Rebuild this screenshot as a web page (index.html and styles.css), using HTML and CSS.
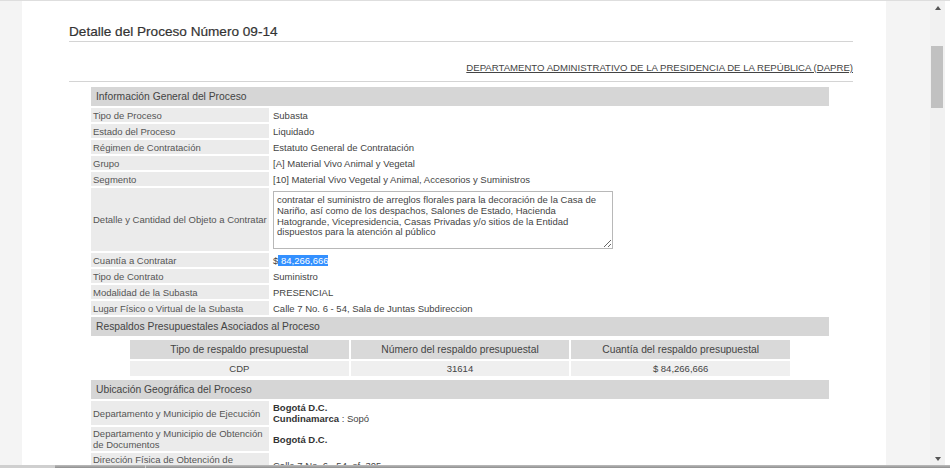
FILE: index.html
```html
<!DOCTYPE html>
<html lang="es">
<head>
<meta charset="UTF-8">
<title>Detalle del Proceso Número 09-14</title>
<link rel="stylesheet" href="styles.css">
</head>
<body>
<div class="window">
    <div class="gutter-left"></div>
    <div class="page">
        <h2 class="title">Detalle del Proceso Número 09-14</h2>
        <div class="agency">
            <a href="#">DEPARTAMENTO ADMINISTRATIVO DE LA PRESIDENCIA DE LA REPÚBLICA (DAPRE)</a>
        </div>
        <table class="detail">
            <colgroup><col class="col-label"><col class="col-value"></colgroup>
            <tr><th colspan="2" class="section">Información General del Proceso</th></tr>
            <tr><td class="label">Tipo de Proceso</td><td class="value">Subasta</td></tr>
            <tr><td class="label">Estado del Proceso</td><td class="value">Liquidado</td></tr>
            <tr><td class="label">Régimen de Contratación</td><td class="value">Estatuto General de Contratación</td></tr>
            <tr><td class="label">Grupo</td><td class="value">[A] Material Vivo Animal y Vegetal</td></tr>
            <tr><td class="label">Segmento</td><td class="value">[10] Material Vivo Vegetal y Animal, Accesorios y Suministros</td></tr>
            <tr>
                <td class="label">Detalle y Cantidad del Objeto a Contratar</td>
                <td class="value boxed"><textarea class="object" readonly>contratar el suministro de arreglos florales para la decoración de la Casa de
Nariño, así como de los despachos, Salones de Estado, Hacienda
Hatogrande, Vicepresidencia, Casas Privadas y/o sitios de la Entidad
dispuestos para la atención al público</textarea></td>
            </tr>
            <tr><td class="label">Cuantía a Contratar</td><td class="value">$<span class="selected"> 84,266,666</span></td></tr>
            <tr><td class="label">Tipo de Contrato</td><td class="value">Suministro</td></tr>
            <tr><td class="label">Modalidad de la Subasta</td><td class="value">PRESENCIAL</td></tr>
            <tr><td class="label">Lugar Físico o Virtual de la Subasta</td><td class="value">Calle 7 No. 6 - 54, Sala de Juntas Subdireccion</td></tr>
            <tr><th colspan="2" class="section">Respaldos Presupuestales Asociados al Proceso</th></tr>
            <tr>
                <td colspan="2" class="nested">
                    <table class="budget">
                        <tr>
                            <th>Tipo de respaldo presupuestal</th>
                            <th>Número del respaldo presupuestal</th>
                            <th>Cuantía del respaldo presupuestal</th>
                        </tr>
                        <tr>
                            <td>CDP</td>
                            <td>31614</td>
                            <td>$ 84,266,666</td>
                        </tr>
                    </table>
                </td>
            </tr>
            <tr><th colspan="2" class="section">Ubicación Geográfica del Proceso</th></tr>
            <tr class="tall">
                <td class="label">Departamento y Municipio de Ejecución</td>
                <td class="value"><b>Bogotá D.C.</b><br><b>Cundinamarca</b> : Sopó</td>
            </tr>
            <tr class="tall">
                <td class="label">Departamento y Municipio de Obtención de Documentos</td>
                <td class="value"><b>Bogotá D.C.</b></td>
            </tr>
            <tr class="tall">
                <td class="label">Dirección Física de Obtención de Documentos</td>
                <td class="value">Calle 7 No. 6 - 54, of. 305</td>
            </tr>
        </table>
    </div>
    <div class="gutter-right"></div>
    <div class="scrollbar">
        <span class="arrow up"></span>
        <span class="thumb"></span>
        <span class="arrow down"></span>
    </div>
    <div class="edge"></div>
</div>
<div class="taskbar">
    <span class="tab"></span>
    <span class="tab"></span>
</div>
</body>
</html>
```

FILE: styles.css
```css
body, html {
    margin: 0;
    height: 100%;
    overflow: hidden;
    font-family: "Liberation Sans", Arial, sans-serif;
    color: #444;
    background: #fff;
}

.window {
    display: flex;
    height: 465px;
    border-top: 1px solid #dedede;
    box-sizing: border-box;
    overflow: hidden;
}

.gutter-left {
    width: 22px;
    flex: none;
    background: #f4f4f4;
}

.page {
    width: 864px;
    flex: none;
    background: #fff;
    padding: 23px 33px 0 47px;
    box-sizing: border-box;
}

.gutter-right {
    width: 44px;
    flex: none;
    background: #f4f4f4;
}

.edge {
    flex: 1;
    background: #fff;
}

.title {
    margin: 0;
    font-size: 13.6px;
    font-weight: normal;
    color: #333;
    line-height: 16px;
    padding-bottom: 1px;
    border-bottom: 1px solid #d4d4d4;
    -webkit-text-stroke: 0.2px #333;
}

.agency {
    text-align: right;
    font-size: 9.6px;
    line-height: 11px;
    padding: 20px 0 8px;
    border-bottom: 1px solid #d4d4d4;
}

.agency a {
    color: #444;
}

/* main detail table */
.detail {
    width: 742px;
    margin: 3px 0 0 20px;
    table-layout: fixed;
    border-spacing: 2px;
    font-size: 9.5px;
}

.col-label { width: 178px; }
.col-value { width: 558px; }

.detail td {
    height: 14px;
    padding: 0 2px;
    line-height: 11px;
    vertical-align: middle;
}

.detail .label {
    background: #ebebeb;
    color: #555;
}

.detail .value {
    background: #fff;
}

.section {
    height: 19px;
    padding: 0 5px;
    text-align: left;
    font-weight: normal;
    font-size: 10.3px;
    background: #d6d6d6;
    color: #444;
}

.detail .boxed {
    padding: 3px 2px 2px;
}

.object {
    display: block;
    width: 340px;
    height: 58px;
    box-sizing: border-box;
    margin: 0;
    padding: 3px 3px;
    font-family: "Liberation Sans", Arial, sans-serif;
    font-size: 9.5px;
    line-height: 10.8px;
    color: #444;
    border: 1px solid #b8b8b8;
    resize: both;
    overflow: hidden;
}

.selected {
    background: #3390ff;
    color: #fff;
}

.detail .nested {
    padding: 0;
    background: #fff;
}

.budget {
    width: 664px;
    margin: 0 auto;
    border-spacing: 2px;
    table-layout: fixed;
    font-size: 9.5px;
}

.budget th {
    height: 19px;
    padding: 0;
    font-weight: normal;
    font-size: 10.3px;
    background: #d9d9d9;
    color: #444;
}

.detail .budget td {
    height: 15px;
    padding: 0;
    text-align: center;
    background: #efefef;
}

.detail .tall td {
    padding: 1px 2px;
}

.detail b {
    color: #333;
}

/* fake scrollbar of the frame */
.scrollbar {
    width: 15px;
    flex: none;
    background: #f1f1f1;
    display: flex;
    flex-direction: column;
    align-items: center;
}

.arrow {
    width: 0;
    height: 0;
    border-left: 3.5px solid transparent;
    border-right: 3.5px solid transparent;
}

.arrow.up {
    margin-top: 5px;
    border-bottom: 4px solid #555;
}

.arrow.down {
    margin-top: auto;
    margin-bottom: 4px;
    border-top: 4px solid #555;
}

.thumb {
    width: 12px;
    height: 62px;
    margin-top: 36px;
    background: #c1c1c1;
    align-self: flex-start;
    margin-left: 1px;
}

.taskbar {
    height: 3px;
    display: flex;
    background: linear-gradient(#bdbdbd, #8e8e8e);
}

.taskbar .tab {
    width: 54px;
    border-right: 1px solid #d0d0d0;
    background: #cfcfcf;
}

.taskbar .tab + .tab {
    width: 90px;
    background: transparent;
}
```
